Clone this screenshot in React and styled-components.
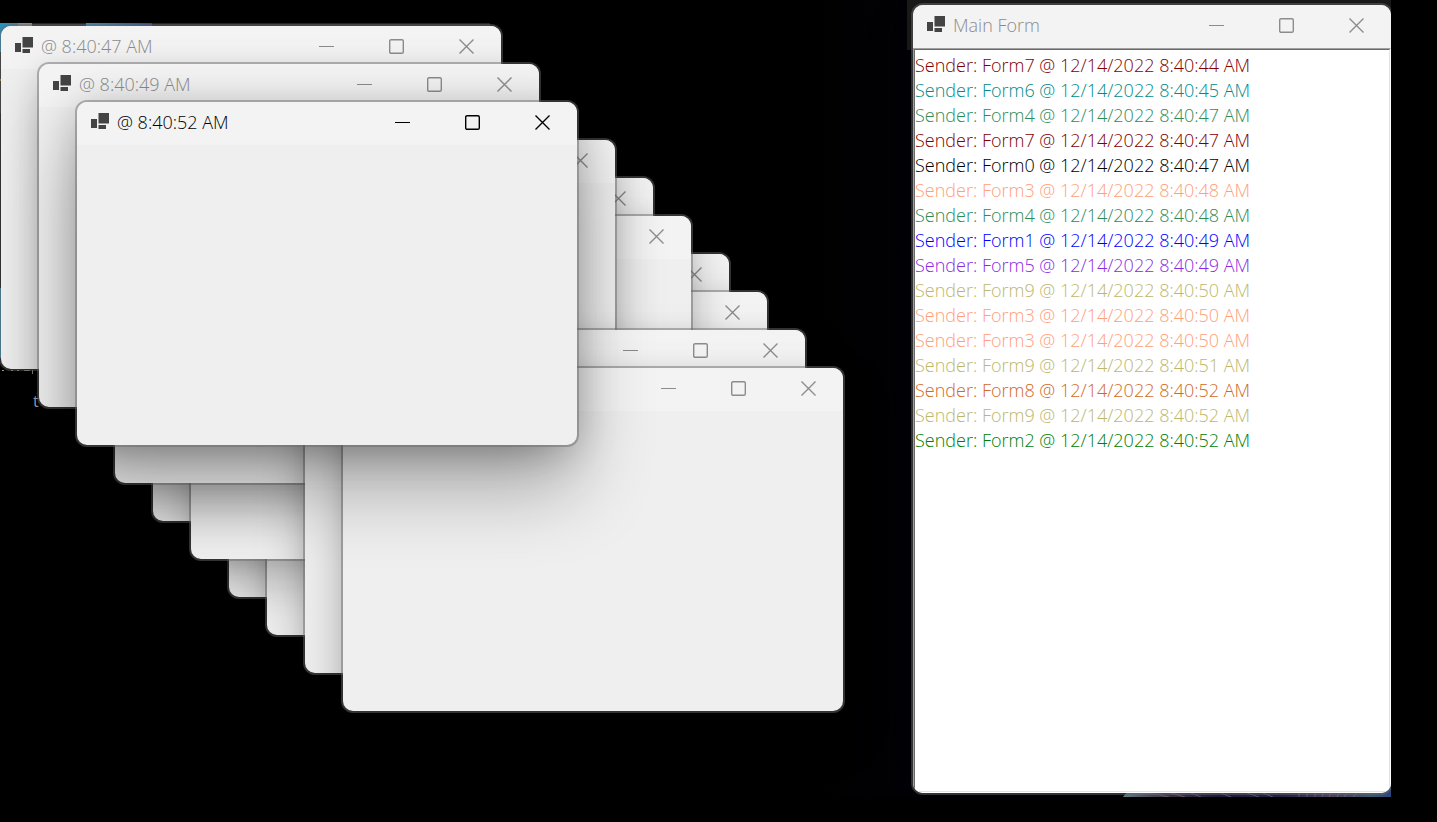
import React from "react";
import styled, { createGlobalStyle, css } from "styled-components";

const GlobalStyle = createGlobalStyle`
  * { box-sizing: border-box; }
  body {
    margin: 0;
    background: #000;
    font-family: "Open Sans", "Noto Sans", sans-serif;
  }
`;

const Screen = styled.div`
  display: flex;
  min-height: 100vh;
  padding: 0 46px 25px 0;
  background: #000;
`;

const Desktop = styled.main`
  position: relative;
  flex: 1;
  overflow: hidden;
  background: linear-gradient(90deg, #000 59%, #030308 66%);
`;

const Wallpaper = styled.svg`
  position: absolute;
  left: ${(p) => p.$left};
  right: ${(p) => p.$right};
  top: ${(p) => p.$top};
  bottom: ${(p) => p.$bottom};
  display: block;
`;

const DarkBackdrop = styled.div`
  position: absolute;
  top: 0;
  right: 0;
  width: 484px;
  height: 50px;
  background: #1c1b1c;
`;

const IconLabel = styled.span`
  position: absolute;
  left: ${(p) => p.$x}px;
  top: ${(p) => p.$y}px;
  color: #a9c4dc;
  font-size: 16px;
  line-height: 20px;
`;

const activeShadow = css`
  box-shadow:
    0 0 0 2px rgba(106, 106, 106, 0.48),
    0 44px 76px rgba(0, 0, 0, 0.3),
    0 4px 40px rgba(0, 0, 0, 0.22);
`;

const idleShadow = css`
  box-shadow:
    0 0 0 2px rgba(106, 106, 106, 0.48),
    0 24px 48px rgba(0, 0, 0, 0.26),
    0 2px 24px rgba(0, 0, 0, 0.08);
`;

const Frame = styled.section`
  position: absolute;
  display: flex;
  flex-direction: column;
  overflow: hidden;
  border-radius: 10px;
  background: #efefef;
  ${(p) => (p.$active ? activeShadow : idleShadow)}
`;

const FormFrame = styled(Frame)`
  left: ${(p) => p.$x}px;
  top: ${(p) => p.$y}px;
  width: 500px;
  height: 343px;
`;

const MainFrame = styled(Frame)`
  top: 5px;
  right: 0;
  bottom: 4px;
  width: 478px;
`;

const TitleBar = styled.header`
  display: flex;
  flex: none;
  align-items: flex-start;
  height: 43px;
  padding-left: 14px;
  background: #f3f3f3;
  color: ${(p) => (p.$active ? "#000" : "#8c8c8c")};
`;

const AppIcon = styled.svg`
  flex: none;
  margin-top: 11px;
`;

const Title = styled.h1`
  flex: 1;
  margin: 0;
  padding-left: 8px;
  font-size: 18px;
  font-weight: 350;
  line-height: 41px;
  white-space: nowrap;
`;

const Controls = styled.div`
  display: flex;
  gap: 1px;
`;

const ControlButton = styled.button`
  display: flex;
  align-items: center;
  justify-content: center;
  width: 69px;
  height: 41px;
  padding: 0;
  border: 0;
  background: transparent;
  color: inherit;
`;

const Log = styled.ol`
  flex: 1;
  margin: 0;
  padding: 3px 0;
  overflow: hidden;
  list-style: none;
  background: #fff;
  border: 1px solid;
  border-color: #696969 #e3e3e3 #e3e3e3 #696969;
`;

const LogPanel = styled.div`
  display: flex;
  flex: 1;
  border: 1px solid;
  border-color: #a0a0a0 #fff #fff #a0a0a0;
`;

const LogLine = styled.li`
  color: ${(p) => p.$color};
  font-size: 18px;
  font-weight: 350;
  line-height: 25px;
  white-space: nowrap;
`;

const COLORS = {
  Form0: "#000000",
  Form1: "#0000ff",
  Form2: "#008000",
  Form3: "#ffa07a",
  Form4: "#2e8b57",
  Form5: "#8a2be2",
  Form6: "#008b8b",
  Form7: "#800000",
  Form8: "#d2691e",
  Form9: "#bdb76b",
};

const MESSAGES = [
  ["Form7", "8:40:44"],
  ["Form6", "8:40:45"],
  ["Form4", "8:40:47"],
  ["Form7", "8:40:47"],
  ["Form0", "8:40:47"],
  ["Form3", "8:40:48"],
  ["Form4", "8:40:48"],
  ["Form1", "8:40:49"],
  ["Form5", "8:40:49"],
  ["Form9", "8:40:50"],
  ["Form3", "8:40:50"],
  ["Form3", "8:40:50"],
  ["Form9", "8:40:51"],
  ["Form8", "8:40:52"],
  ["Form9", "8:40:52"],
  ["Form2", "8:40:52"],
];

// Cascade positions, listed from the back of the stack to the front.
const FORMS = [
  { slot: 6 },
  { slot: 4 },
  { slot: 7 },
  { slot: 5 },
  { slot: 3 },
  { slot: 8 },
  { slot: 9 },
  { slot: 0, title: "@ 8:40:47 AM" },
  { slot: 1, title: "@ 8:40:49 AM" },
  { slot: 2, title: "@ 8:40:52 AM", active: true },
];

const STEP = 38;

function WindowBar({ title, active }) {
  return (
    <TitleBar $active={active}>
      <AppIcon width="18" height="17" viewBox="0 0 18 17" fill="#444" aria-hidden="true">
        <rect x="7.5" y="0" width="10.5" height="10.5" />
        <rect x="0" y="6" width="6" height="9" />
        <rect x="7.5" y="12" width="7.5" height="4" />
      </AppIcon>
      <Title>{title}</Title>
      <Controls>
        <ControlButton type="button" aria-label="Minimize">
          <svg width="15" height="15" viewBox="0 0 15 15" fill="none" stroke="currentColor">
            <path d="M0 7.5H15" />
          </svg>
        </ControlButton>
        <ControlButton type="button" aria-label="Maximize">
          <svg width="15" height="15" viewBox="0 0 15 15" fill="none" stroke="currentColor" strokeWidth="1.4">
            <rect x="0.7" y="0.7" width="13.6" height="13.6" rx="1.4" />
          </svg>
        </ControlButton>
        <ControlButton type="button" aria-label="Close">
          <svg width="15" height="15" viewBox="0 0 15 15" fill="none" stroke="currentColor" strokeWidth="1.4">
            <path d="M0.5 0.5L14.5 14.5M14.5 0.5L0.5 14.5" />
          </svg>
        </ControlButton>
      </Controls>
    </TitleBar>
  );
}

function TopWallpaper() {
  return (
    <Wallpaper $left="0" $top="23px" width="500" height="352" aria-hidden="true">
      <defs>
        <linearGradient id="tile">
          <stop offset="0" stopColor="#2a9fce" />
          <stop offset="1" stopColor="#2d4fa8" />
        </linearGradient>
      </defs>
      <rect width="490" height="12" fill="#2b2829" />
      <rect width="8" height="90" fill="#2b2829" />
      <rect width="32" height="3" fill="#8a9499" />
      <rect width="18" height="6" fill="#2b93c4" />
      <rect y="5" width="4" height="24" fill="#2b93c4" />
      <rect x="86" width="66" height="3" fill="url(#tile)" />
      <rect y="56" width="1" height="2" fill="#e0a040" />
      <rect y="265" width="2" height="70" fill="#3b9cc8" />
      <path d="M2 347.5H4M11 347.5H13M17 347.5H19M24 347.5H30M32.5 347V351" stroke="#b9a98c" fill="none" />
    </Wallpaper>
  );
}

function BottomWallpaper() {
  return (
    <Wallpaper $right="0" $bottom="0" width="268" height="16" aria-hidden="true">
      <defs>
        <linearGradient id="swirl">
          <stop offset="0" stopColor="#6fa3ae" />
          <stop offset="0.15" stopColor="#62405f" />
          <stop offset="0.35" stopColor="#2a244f" />
          <stop offset="0.6" stopColor="#302c5c" />
          <stop offset="0.78" stopColor="#6a5578" />
          <stop offset="0.92" stopColor="#47728e" />
          <stop offset="1" stopColor="#33508a" />
        </linearGradient>
      </defs>
      <path d="M0 16Q2 12 8 10L268 0V16Z" fill="url(#swirl)" />
      <g fill="none" stroke="#8aa5b5" strokeOpacity="0.6">
        <path d="M2 16Q22 9 46 16M48 12L62 16M68 12L78 16M98 12L108 16M124 12L136 16M140 12L150 16" />
        <path d="M176 12V16M184 12V16M192 12V16M200 12L199 16M208 12L206 16M216 12L214 16M224 12L221 16M234 12L230 16" />
      </g>
    </Wallpaper>
  );
}

export default function App() {
  return (
    <>
      <GlobalStyle />
      <Screen>
        <Desktop>
          <TopWallpaper />
          <DarkBackdrop />
          <BottomWallpaper />
          <IconLabel $x={33} $y={391}>t</IconLabel>
          {FORMS.map(({ slot, title, active }) => (
            <FormFrame key={slot} $x={1 + slot * STEP} $y={26 + slot * STEP} $active={active}>
              <WindowBar title={title} active={active} />
            </FormFrame>
          ))}
          <MainFrame>
            <WindowBar title="Main Form" />
            <LogPanel>
              <Log>
                {MESSAGES.map(([form, time], i) => (
                  <LogLine key={i} $color={COLORS[form]}>
                    Sender: {form} @ 12/14/2022 {time} AM
                  </LogLine>
                ))}
              </Log>
            </LogPanel>
          </MainFrame>
        </Desktop>
      </Screen>
    </>
  );
}
